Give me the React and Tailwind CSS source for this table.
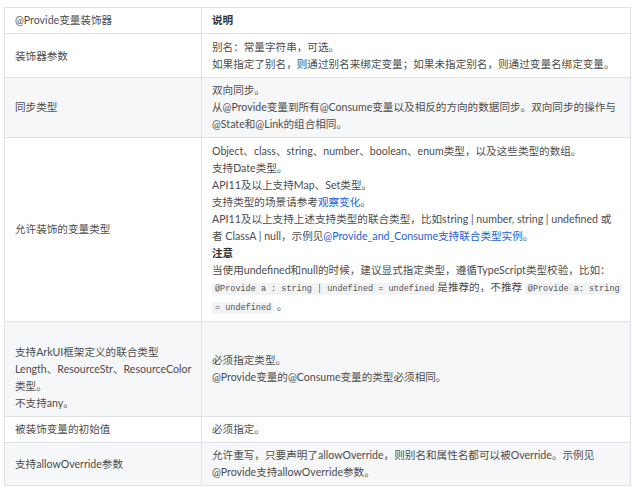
import React from "react";

function Code({ children }) {
  return (
    <span className="rounded-[3px] bg-[#f1f3f5] px-[3px] py-[1px] text-[8.5px] text-[#555] font-mono">
      {children}
    </span>
  );
}

function L({ children }) {
  return <div className="whitespace-nowrap">{children}</div>;
}

const A = ({ children }) => <span className="text-[#1a62d6]">{children}</span>;

export default function App() {
  const td = "border border-[#dfe1e5] px-[10px] py-[4px] align-middle";
  return (
    <div className="bg-white w-[636px] h-[488px] pt-[7px] pl-[4px] font-['Lato','Noto_Sans_CJK_SC',sans-serif]">
      <table className="border-collapse w-[627px] text-[10.6px] leading-[17px] text-[#4d4d4d] table-fixed">
        <colgroup>
          <col className="w-[197px]" />
          <col />
        </colgroup>
        <tbody>
          <tr className="bg-white">
            <td className={td}>@Provide变量装饰器</td>
            <td className={td + " font-bold text-[#333]"}>说明</td>
          </tr>
          <tr className="bg-white">
            <td className={td + " pt-[5px]"}>装饰器参数</td>
            <td className={td + " pt-[5px]"}>
              <L>别名：常量字符串，可选。</L>
              <L>如果指定了别名，则通过别名来绑定变量；如果未指定别名，则通过变量名绑定变量。</L>
            </td>
          </tr>
          <tr className="bg-[#f6f7f9]">
            <td className={td}>同步类型</td>
            <td className={td}>
              <L>双向同步。</L>
              <L>从@Provide变量到所有@Consume变量以及相反的方向的数据同步。双向同步的操作与</L>
              <L>@State和@Link的组合相同。</L>
            </td>
          </tr>
          <tr className="bg-white">
            <td className={td}>允许装饰的变量类型</td>
            <td className={td + " pt-[5px]"}>
              <L>Object、class、string、number、boolean、enum类型，以及这些类型的数组。</L>
              <L>支持Date类型。</L>
              <L>API11及以上支持Map、Set类型。</L>
              <L>支持类型的场景请参考<A>观察变化</A>。</L>
              <L>API11及以上支持上述支持类型的联合类型，比如string | number, string | undefined 或</L>
              <L>者 ClassA | null，示例见<A>@Provide_and_Consume支持联合类型实例</A>。</L>
              <L><span className="font-bold text-[#333]">注意</span></L>
              <L>当使用undefined和null的时候，建议显式指定类型，遵循TypeScript类型校验，比如：</L>
              <L><Code>@Provide a : string | undefined = undefined</Code>是推荐的，不推荐 <Code>@Provide a: string</Code></L>
              <L><Code>= undefined</Code> 。</L>
            </td>
          </tr>
          <tr className="bg-[#f6f7f9]">
            <td className={td + " pt-[5px]"}>
              <L>&nbsp;</L>
              <L>支持ArkUI框架定义的联合类型</L>
              <L>Length、ResourceStr、ResourceColor</L>
              <L>类型。</L>
              <L>不支持any。</L>
            </td>
            <td className={td}>
              <L>必须指定类型。</L>
              <L>@Provide变量的@Consume变量的类型必须相同。</L>
            </td>
          </tr>
          <tr className="bg-white">
            <td className={td}>被装饰变量的初始值</td>
            <td className={td}>必须指定。</td>
          </tr>
          <tr className="bg-[#f6f7f9]">
            <td className={td}>支持allowOverride参数</td>
            <td className={td}>
              <L>允许重写，只要声明了allowOverride，则别名和属性名都可以被Override。示例见</L>
              <L>@Provide支持allowOverride参数。</L>
            </td>
          </tr>
        </tbody>
      </table>
    </div>
  );
}
